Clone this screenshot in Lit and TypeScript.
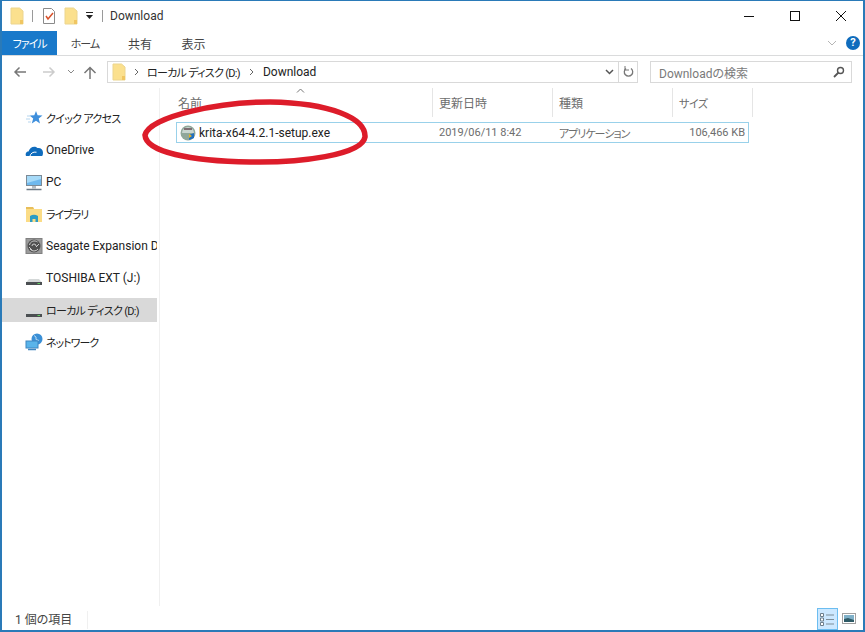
import { LitElement, css, html, svg } from 'lit'
import { customElement } from 'lit/decorators.js'

const folder = svg`<path d="M1 1h8.500l3.500 3v13H1z" fill="#fbe08e" stroke="#ecd58e"/><path d="M10 13h3v4h-3z" fill="#f0c662"/>`

const navItems = [
  { label: 'クイック アクセス', icon: 'star', cls: 'kana wide' },
  { label: 'OneDrive', icon: 'cloud' },
  { label: 'PC', icon: 'pc' },
  { label: 'ライブラリ', icon: 'lib', cls: 'kana' },
  { label: 'Seagate Expansion Drive', icon: 'seagate' },
  { label: 'TOSHIBA EXT (J:)', icon: 'drive' },
  { label: 'ローカル ディスク (D:)', icon: 'drive', cls: 'kana wide', selected: true },
  { label: 'ネットワーク', icon: 'net', cls: 'kana' },
]

const navIcon = (name: string) => {
  switch (name) {
    case 'star':
      return svg`<path d="M11 2l1.600 4.200 4.900.3-3.800 3 1.300 5-4-2.800-4.200 2.800 1.400-5L4.600 6.500l4.700-.3z" fill="#3f8fdc"/><path d="M2 7h4M1 10h4M3 13h3" stroke="#b5d5ee"/>`
    case 'cloud':
      return svg`<path d="M1 15c-1-2.500.5-4.500 2.500-4.500 1-4 6-6.500 9-3.500 3-.5 5.500 1.500 5.500 4.500 0 2-.5 3.500-1 3.500z" fill="#0f6cbd"/><path d="M5 15c.5-2.500 3-4.500 6.500-3.800" stroke="#fff" fill="none"/>`
    case 'pc':
      return svg`<rect x="1.500" y="2.500" width="15" height="10" fill="#6fb9ee" stroke="#7c8a96"/><path d="M2 3h14v3L2 10z" fill="#a6daf8"/><path d="M7 13h4v2.500H7z" fill="#b4bcc3"/><path d="M1.500 16.500h15" stroke="#6c7a86" stroke-width="1.500"/>`
    case 'lib':
      return svg`<path d="M1 2h7l1 2h8v13H1z" fill="#fbdc86"/><path d="M1 2h7l1 2H1z" fill="#e8be5a"/><path d="M5 17v-6q4-2.500 8 0v6h-2.500v-3h-3v3z" fill="#2d9cc4"/>`
    case 'seagate':
      return svg`<rect x="1" y="1.500" width="16" height="15" fill="#9a9a9a" stroke="#808080"/><circle cx="9" cy="9" r="6.500" fill="#505050"/><path d="M4.500 8a5 5 0 0 1 8-3M5 12a5 5 0 0 0 8 0M7 9a2 2 0 0 1 4 0M4 10l3 3M14 7l-3 3" stroke="#cfcfcf" fill="none"/>`
    case 'drive':
      return svg`<path d="M4 10h10l3 3.500H1z" fill="#d4d8d8"/><rect x="1" y="13" width="16" height="3" fill="#4b4f52"/><path d="M12.500 14.500h2.500" stroke="#5fd05f"/>`
    default:
      return svg`<circle cx="12" cy="6" r="5.500" fill="#3a8fd6"/><path d="M9 2.500q3 1 2 4l3 1" stroke="#b9dcf4" fill="none"/><rect x="1" y="8" width="12" height="7" fill="#59b4ea" stroke="#3f86c0"/><path d="M3 16.500h8" stroke="#3f86c0" stroke-width="1.500"/>`
  }
}

@customElement('app-root')
export class AppRoot extends LitElement {
  static styles = css`
    :host {
      display: block;
      height: 632px;
      font-family: Roboto, 'Noto Sans CJK JP', sans-serif;
      font-feature-settings: 'palt';
      font-size: 12px;
      color: #333;
    }
    .kana { font-size: 11px; letter-spacing: -1px; }
    .kana.wide { letter-spacing: -0.7px; }
    .win {
      position: relative;
      box-sizing: border-box;
      height: 632px;
      display: flex;
      flex-direction: column;
      background: #fff;
      border: 2px solid #2a7ab8;
      border-width: 1px 2px 2px 2px;
      overflow: hidden;
    }
    .title {
      height: 30px;
      display: flex;
      align-items: center;
      padding-left: 8px;
      flex: none;
    }
    .title svg { display: block; flex: none; }
    .sep { width: 1px; height: 12px; background: #9a9a9a; flex: none; }
    .title-text { margin-left: 7px; font-size: 12px; color: #333; }
    .winbtns { margin-left: auto; display: flex; align-items: center; gap: 30px; padding-right: 14px; }
    .tabs {
      height: 24px;
      flex: none;
      display: flex;
      align-items: stretch;
      border-bottom: 1px solid #dadbdc;
    }
    .tab { display: flex; align-items: center; justify-content: center; width: 56px; color: #444; font-size: 12px; }
    .tab.kana { font-size: 11px; }
    .tab.file { width: 55px; background: #1979ca; color: #fff; margin-left: -2px; padding-left: 2px; }
    .tab.mid { width: 54px; }
    .tab.last { width: 53px; }
    .tabs-end { margin-left: auto; display: flex; align-items: center; gap: 9px; padding-right: 3px; }
    .help {
      width: 14px;
      height: 14px;
      border-radius: 50%;
      background: #0f6cbd;
      color: #fff;
      font-size: 11px;
      font-weight: 700;
      line-height: 14px;
      text-align: center;
    }
    .addr {
      height: 32px;
      flex: none;
      display: flex;
      align-items: center;
      padding: 0 11px 0 11px;
    }
    .nav-btns { width: 94px; display: flex; align-items: center; flex: none; }
    .crumbs {
      width: 531px;
      height: 22px;
      box-sizing: border-box;
      border: 1px solid #d9d9d9;
      display: flex;
      align-items: center;
      padding-left: 4px;
      flex: none;
      color: #222;
    }
    .crumbs .end { margin-left: auto; display: flex; align-items: center; height: 100%; }
    .search {
      margin-left: auto;
      width: 202px;
      height: 22px;
      box-sizing: border-box;
      border: 1px solid #d9d9d9;
      display: flex;
      align-items: center;
      justify-content: space-between;
      padding: 0 6px 0 8px;
      color: #7a7a7a;
    }
    .body { flex: 1; display: flex; min-height: 0; }
    .side {
      width: 157px;
      flex: none;
      padding-top: 18px;
      border-right: 1px solid #f0f0f0;
      box-sizing: content-box;
    }
    .nav {
      height: 24px;
      margin: 0 2px 8px 0;
      display: flex;
      align-items: center;
      padding-left: 23px;
      gap: 3px;
      white-space: nowrap;
      overflow: hidden;
      color: #222;
    }
    .nav.selected { background: #d9d9d9; }
    .nav svg { flex: none; }
    .list { flex: 1; padding-left: 16px; position: relative; min-width: 0; }
    .head { height: 29px; display: flex; color: #6d6d6d; }
    .head div { box-sizing: border-box; border-right: 1px solid #e5e5e5; padding-left: 6px; display: flex; align-items: center; }
    .head .first { padding-left: 2px; }
    .sort { position: absolute; left: 136px; top: 0; }
    .row {
      margin-top: 5px;
      height: 21px;
      width: 573px;
      box-sizing: border-box;
      border: 1px solid #99d1ea;
      display: flex;
      align-items: center;
      color: #6d6d6d;
    }
    .row span { white-space: nowrap; }
    .row .name { width: 257px; display: flex; align-items: center; gap: 3px; padding-left: 3px; box-sizing: border-box; color: #222; }
    .row .date { width: 120px; padding-left: 5px; box-sizing: border-box; font-size: 11px; }
    .row .kind { width: 118px; padding-left: 5px; box-sizing: border-box; }
    .row .size { flex: 1; text-align: right; padding-right: 3px; font-size: 11px; }
    .status {
      height: 24px;
      flex: none;
      display: flex;
      align-items: center;
      padding-left: 13px;
      color: #444;
    }
    .status-text { padding-right: 15px; border-right: 1px solid #f0f0f0; line-height: 18px; margin-top: 3px; }
    .views { margin-left: auto; display: flex; align-items: center; gap: 4px; padding-right: 7px; height: 100%; }
    .v-on { width: 21px; height: 22px; align-self: flex-end; box-sizing: border-box; background: #cce8ff; border: 1px solid #6cbdf0; display: flex; align-items: center; justify-content: center; }
    .mark { position: absolute; left: -2px; top: -1px; pointer-events: none; }
  `

  render() {
    return html`
      <div class="win">
        <div class="title">
          <svg width="14" height="18" viewBox="0 0 14 18">${folder}</svg>
          <div class="sep" style="margin:0 9px 0 8px"></div>
          <svg width="14" height="16" viewBox="0 0 14 16">
            <path d="M1.500.5h8l3 3v12h-11z" fill="#fff" stroke="#8a8a8a"/>
            <path d="M4 8l2 3 5-6" fill="none" stroke="#d8512a" stroke-width="1.500"/>
          </svg>
          <svg style="margin-left:8px" width="14" height="18" viewBox="0 0 14 18">${folder}</svg>
          <svg style="margin-left:7px" width="9" height="8" viewBox="0 0 9 8">
            <path d="M1 .5h7" stroke="#222"/><path d="M1 3h7L4.500 7z" fill="#222"/>
          </svg>
          <div class="sep" style="margin-left:8px"></div>
          <span class="title-text">Download</span>
          <div class="winbtns">
            <svg width="16" height="16" viewBox="0 0 16 16"><path d="M3 8.500h10" stroke="#111"/></svg>
            <svg width="16" height="16" viewBox="0 0 16 16"><rect x="3.500" y="3.500" width="9" height="9" fill="none" stroke="#111"/></svg>
            <svg width="16" height="16" viewBox="0 0 16 16"><path d="M3 3l10 10M13 3L3 13" stroke="#111"/></svg>
          </div>
        </div>
        <div class="tabs">
          <div class="tab file kana">ファイル</div>
          <div class="tab kana">ホーム</div>
          <div class="tab mid">共有</div>
          <div class="tab last">表示</div>
          <div class="tabs-end">
            <svg width="10" height="6" viewBox="0 0 10 6"><path d="M1 1l4 4 4-4" fill="none" stroke="#b5b5b5"/></svg>
            <div class="help">?</div>
          </div>
        </div>
        <div class="addr">
          <div class="nav-btns">
            <svg width="14" height="12" viewBox="0 0 14 12"><path d="M13 6H2M6.500 1.500L2 6l4.500 4.500" fill="none" stroke="#777" stroke-width="1.500"/></svg>
            <svg style="margin-left:15px" width="14" height="12" viewBox="0 0 14 12"><path d="M1 6h11M7.500 1.500L12 6l-4.500 4.500" fill="none" stroke="#ccc" stroke-width="1.500"/></svg>
            <svg style="margin-left:11px" width="8" height="6" viewBox="0 0 8 6"><path d="M1 1l3 3 3-3" fill="none" stroke="#888"/></svg>
            <svg style="margin-left:8px" width="14" height="13" viewBox="0 0 14 13"><path d="M7 13V2M1.500 7L7 1.500 12.500 7" fill="none" stroke="#777" stroke-width="1.500"/></svg>
          </div>
          <div class="crumbs">
            <svg width="14" height="18" viewBox="0 0 14 18">${folder}</svg>
            <svg style="margin:0 8px 0 8px" width="5" height="8" viewBox="0 0 5 8"><path d="M1 1l3 3-3 3" fill="none" stroke="#666"/></svg>
            <span class="kana wide">ローカル ディスク (D:)</span>
            <svg style="margin:0 9px 0 9px" width="5" height="8" viewBox="0 0 5 8"><path d="M1 1l3 3-3 3" fill="none" stroke="#666"/></svg>
            <span>Download</span>
            <div class="end">
              <svg style="margin-right:4px" width="9" height="6" viewBox="0 0 9 6"><path d="M1 1l3.500 3.500L8 1" fill="none" stroke="#555" stroke-width="1.500"/></svg>
              <div style="width:1px;height:100%;background:#d9d9d9"></div>
              <svg style="margin:0 3px 0 4px" width="11" height="12" viewBox="0 0 11 12"><path d="M3 2.500a4.200 4.200 0 1 0 5 0" fill="none" stroke="#777" stroke-width="1.300"/><path d="M2 0v4h4" fill="none" stroke="#777"/></svg>
            </div>
          </div>
          <div class="search">
            <span>Downloadの検索</span>
            <svg width="12" height="12" viewBox="0 0 12 12"><circle cx="7.500" cy="4.500" r="3" fill="none" stroke="#555" stroke-width="1.400"/><path d="M5.500 6.500L1 11" stroke="#555" stroke-width="1.800"/></svg>
          </div>
        </div>
        <div class="body">
          <div class="side">
            ${navItems.map(
              (n) => html`<div class="nav ${n.selected ? 'selected' : ''}">
                <svg width="18" height="18" viewBox="0 0 18 18">${navIcon(n.icon)}</svg>
                <span class=${n.cls ?? ''}>${n.label}</span>
              </div>`
            )}
          </div>
          <div class="list">
            <svg class="sort" width="9" height="5" viewBox="0 0 9 5"><path d="M1 4.500L4.500 1 8 4.500" fill="none" stroke="#777"/></svg>
            <div class="head">
              <div class="first" style="width:257px">名前</div>
              <div style="width:120px">更新日時</div>
              <div style="width:120px">種類</div>
              <div style="width:80px"><span class="kana" style="letter-spacing:-.5px">サイズ</span></div>
            </div>
            <div class="row">
              <span class="name">
                <svg width="16" height="16" viewBox="0 0 16 16">
                  <circle cx="8" cy="8" r="7.500" fill="#8fa79a"/>
                  <path d="M2 8a6 6 0 0 1 12 0z" fill="#c9d6d0"/>
                  <rect x="4" y="3" width="8" height="2" fill="#7d6d72"/>
                  <path d="M9 10l5-2v5l-5 2z" fill="#1f6fc0"/>
                  <path d="M9 9l3 2-3 2z" fill="#e6b422"/>
                </svg>
                <span>krita-x64-4.2.1-setup.exe</span>
              </span>
              <span class="date">2019/06/11 8:42</span>
              <span class="kind kana">アプリケーション</span>
              <span class="size">106,466 KB</span>
            </div>
          </div>
        </div>
        <div class="status">
          <span class="status-text">1 個の項目</span>
          <div class="views">
            <div class="v-on">
              <svg width="15" height="13" viewBox="0 0 15 13"><path d="M.5.5h3v3h-3zM.5 5h3v3h-3zM.5 9.500h3v3h-3z" fill="#fff" stroke="#6d7f8c"/><path d="M6 2h8M6 6.500h8M6 11h8" stroke="#7d8d98"/></svg>
            </div>
            <svg width="14" height="11" viewBox="0 0 14 11"><rect x=".5" y=".5" width="13" height="10" fill="#fff" stroke="#a0a0a0"/><rect x="2" y="2" width="10" height="7" fill="#7fb0c8"/><path d="M2 6l4-1 6 2v2H2z" fill="#2e5a66"/></svg>
          </div>
        </div>
        <svg class="mark" width="865" height="632" viewBox="0 0 865 632">
          <path d="M145 135C150 116 220 102 270 102C330 103 366 118 365 137C362 155 300 163 250 162C190 161 146 152 145 135Z" fill="none" stroke="#dd1c2a" stroke-width="5.500"/>
        </svg>
      </div>
    `
  }
}
